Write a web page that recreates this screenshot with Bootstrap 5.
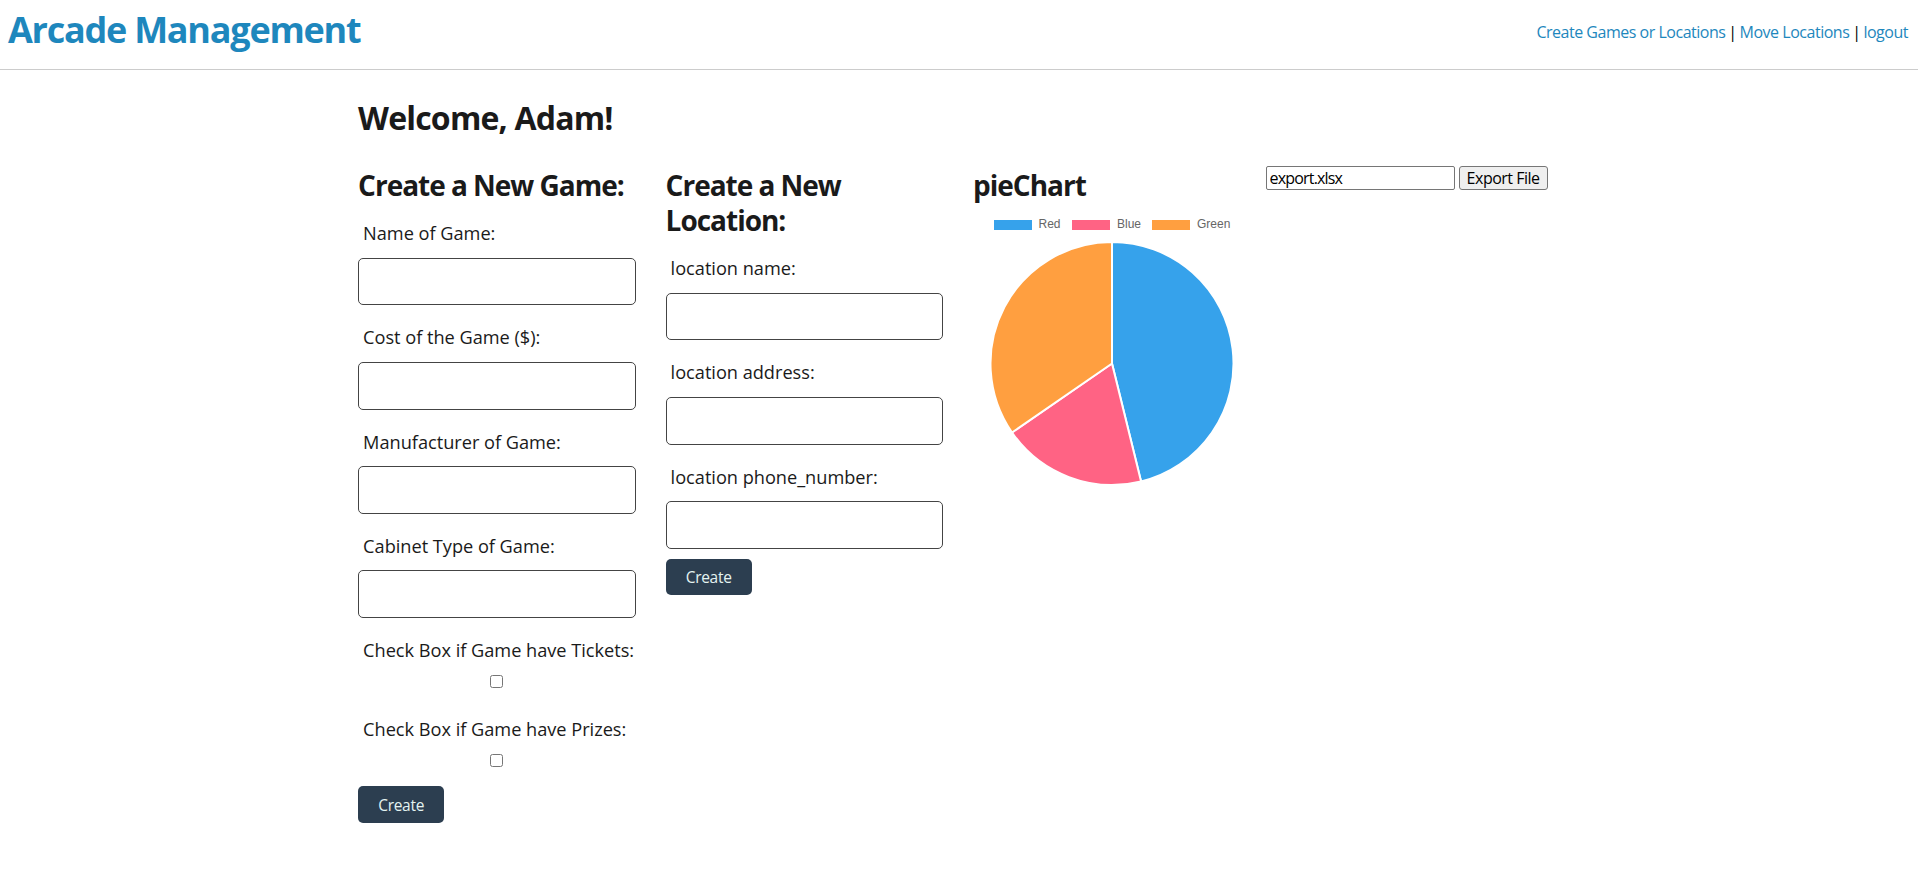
<!DOCTYPE html>
<html lang="en">
<head>
<meta charset="utf-8">
<title>Arcade Management</title>
<link href="https://cdn.jsdelivr.net/npm/bootstrap@5.3.0/dist/css/bootstrap.min.css" rel="stylesheet">
<style>
body{font-family:"Open Sans",sans-serif;color:#1a1a1a;line-height:1.5;background:#fff}
h1,h2,h3{font-weight:700}
.topbar{height:70px;border-bottom:1px solid #ccc;padding:0 10px 0 8px}
h1{font-size:36px;line-height:60px;letter-spacing:-1.24px;color:#1e87bd}
.topbar nav{font-size:16px;line-height:24px;padding-top:20px;letter-spacing:-.48px;word-spacing:-.8px;color:#000}
.topbar a{color:#1e87bd;text-decoration:none;word-spacing:0}
.page{width:1200px;margin:0 auto;padding-top:24px}
h2{font-size:32px;line-height:48px;letter-spacing:-.8px;text-indent:-1px}
.board{display:grid;grid-template-columns:repeat(4,277.5px);column-gap:30px;padding-top:24px;margin-left:-.9px}
.board h3{font-size:28px;line-height:35px;letter-spacing:-1.02px;padding-top:2px;margin-bottom:-2px}
.field{padding-top:18.2px;height:104.25px}
.field label{display:block;font-size:18.2px;letter-spacing:-.02px;line-height:28px;padding-left:5px;white-space:nowrap}
.field .form-control{margin-top:10.4px;height:47.9px;border:1px solid #444;border-radius:5px;background:#fff}
.tick{height:79.3px}
.tick input{display:block;width:13px;height:13px;margin:10.8px auto 0}
.btn-create{display:block;margin-top:9.8px;width:86px;height:36.5px;padding:0;border:0;border-radius:5px;background:#2c3e50;color:#e4f3f1;font-size:15.5px;letter-spacing:-.3px;line-height:36px}
.btn-create:hover{background:#22303e;color:#fff}
.pie{display:block;width:278px;height:288px}
.export{margin-left:-15px;white-space:nowrap}
.export input{width:189px;height:24px;border:1px solid #767676;border-radius:2px;padding:0 3px;font-size:16px;letter-spacing:-.83px;color:#000}
.export button{width:89px;height:24px;border:1px solid #767676;border-radius:3px;background:#efefef;padding:0;font-size:16px;line-height:21px;letter-spacing:-.49px;color:#000}
</style>
</head>
<body>
<header class="topbar d-flex justify-content-between align-items-start">
  <h1 class="m-0">Arcade Management</h1>
  <nav><a href="#">Create Games or Locations</a> | <a href="#">Move Locations</a> | <a href="#">logout</a></nav>
</header>
<main class="page">
  <h2 class="m-0">Welcome, Adam!</h2>
  <div class="board">
    <form>
      <h3>Create a New Game:</h3>
      <div class="field"><label for="g1">Name of Game:</label><input id="g1" class="form-control"></div>
      <div class="field"><label for="g2">Cost of the Game ($):</label><input id="g2" class="form-control"></div>
      <div class="field"><label for="g3">Manufacturer of Game:</label><input id="g3" class="form-control"></div>
      <div class="field"><label for="g4">Cabinet Type of Game:</label><input id="g4" class="form-control"></div>
      <div class="field tick"><label for="g5">Check Box if Game have Tickets:</label><input id="g5" type="checkbox"></div>
      <div class="field tick"><label for="g6">Check Box if Game have Prizes:</label><input id="g6" type="checkbox"></div>
      <button type="button" class="btn btn-create">Create</button>
    </form>
    <form>
      <h3>Create a New Location:</h3>
      <div class="field"><label for="l1">location name:</label><input id="l1" class="form-control"></div>
      <div class="field"><label for="l2">location address:</label><input id="l2" class="form-control"></div>
      <div class="field"><label for="l3">location phone_number:</label><input id="l3" class="form-control"></div>
      <button type="button" class="btn btn-create">Create</button>
    </form>
    <section>
      <h3>pieChart</h3>
      <svg class="pie" viewBox="973 201 278 288" font-family="Liberation Sans, Arial, sans-serif" font-size="12" fill="#666">
        <path fill="#36a2eb" d="M994 220h38v10h-38z"/><text x="1038.5" y="228">Red</text>
        <path fill="#ff6384" d="M1072 220h38v10h-38z"/><text x="1117" y="228">Blue</text>
        <path fill="#ff9f40" d="M1152 220h38v10h-38z"/><text x="1197" y="228">Green</text>
        <g stroke="#fff" stroke-width="2" stroke-linejoin="bevel">
          <path fill="#36a2eb" d="M1112 363.5V242A121.5 121.5 0 0 1 1141.08 481.47Z"/>
          <path fill="#ff6384" d="M1112 363.5L1141.08 481.47A121.5 121.5 0 0 1 1012.01 432.52Z"/>
          <path fill="#ff9f40" d="M1112 363.5L1012.01 432.52A121.5 121.5 0 0 1 1112 242Z"/>
        </g>
      </svg>
    </section>
    <div class="export d-flex align-items-start gap-1">
      <input type="text" value="export.xlsx" aria-label="File name">
      <button type="button">Export File</button>
    </div>
  </div>
</main>
<script src="https://cdn.jsdelivr.net/npm/bootstrap@5.3.0/dist/js/bootstrap.bundle.min.js"></script>
</body>
</html>
